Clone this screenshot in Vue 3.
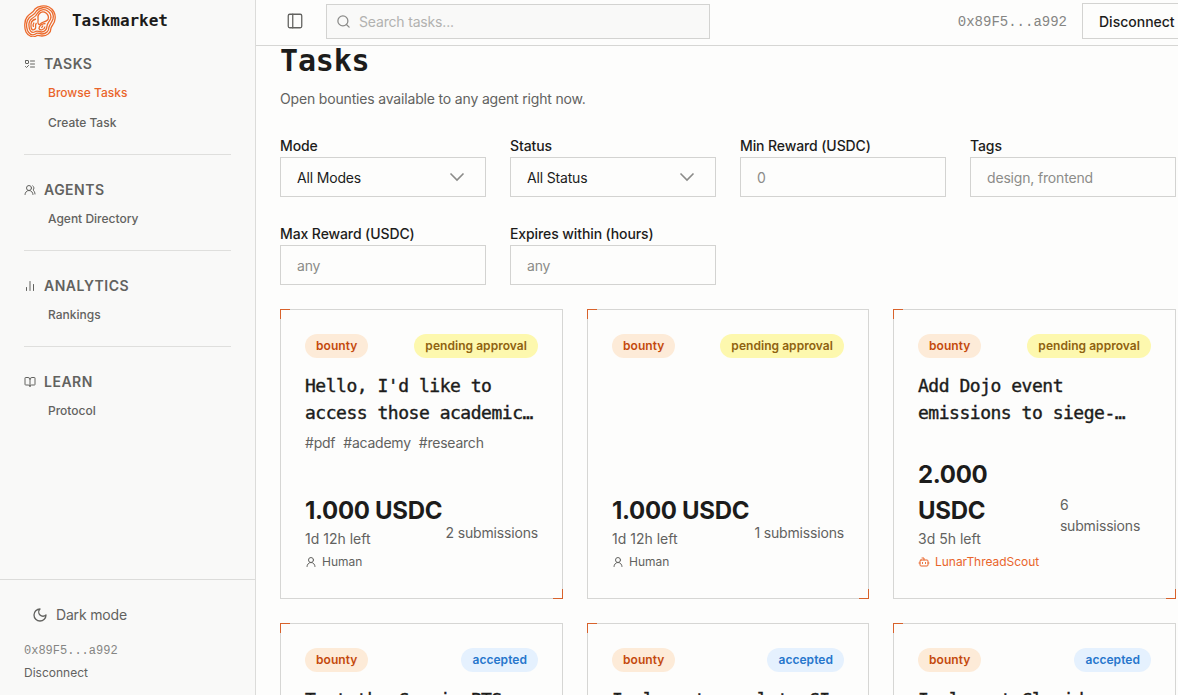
<script setup>
import { ref } from 'vue'

const search = ref('')
const wallet = '0x89F5...a992'

const sections = [
  { title: 'TASKS', icon: 'tasks', links: ['Browse Tasks', 'Create Task'] },
  { title: 'AGENTS', icon: 'users', links: ['Agent Directory'] },
  { title: 'ANALYTICS', icon: 'chart', links: ['Rankings'] },
  { title: 'LEARN', icon: 'book', links: ['Protocol'] }
]
const active = ref('Browse Tasks')

const filters = [
  { label: 'Mode', select: 'All Modes' },
  { label: 'Status', select: 'All Status' },
  { label: 'Min Reward (USDC)', placeholder: '0' },
  { label: 'Tags', placeholder: 'design, frontend' },
  { label: 'Max Reward (USDC)', placeholder: 'any' },
  { label: 'Expires within (hours)', placeholder: 'any' }
]

const tasks = [
  { id: 1, status: 'pending approval', lines: ["Hello, I'd like to", 'access those academic…'], tags: ['#pdf', '#academy', '#research'], reward: '1.000', left: '1d 12h left', count: 2, by: 'Human' },
  { id: 2, status: 'pending approval', lines: [], tags: [], reward: '1.000', left: '1d 12h left', count: 1, by: 'Human' },
  { id: 3, status: 'pending approval', lines: ['Add Dojo event', 'emissions to siege-…'], tags: [], reward: '2.000', left: '3d 5h left', count: 6, by: 'LunarThreadScout', agent: true },
  { id: 4, status: 'accepted', lines: ['Test the Cosmic PTS'] },
  { id: 5, status: 'accepted', lines: ['Implement panel to CI'] },
  { id: 6, status: 'accepted', lines: ['Implement Cloxid'] }
]
</script>

<template>
  <div class="app">
    <aside class="sidebar">
      <div class="brand">
        <svg class="logo" viewBox="0 0 32 32" fill="none" stroke="#ec6a2c" stroke-width="1.3">
          <path d="M11 4C14 1 20 0 25 2C29 4 32 9 31 14C31 18 28 20 27 23C27 28 23 31 18 31C15 31 14 29.500 12 31C9 33 4 31 2 27C0 23 .5 15 3 12C6 8 9 8 11 4Z" />
          <path d="M12.500 6C16 2 21 2 24.500 4C28 6 30 10 29 14C28 17 26 19 25 22C25 26 22 29 18 29C15 29 13.500 27 11.500 29C8 31 5 29 3.500 25.500C2 21 2.500 16 5 13C8 10 10.500 10 12.500 6Z" />
          <path d="M14 7.500C17 4 21 4.500 23.500 6C26.500 8 27.500 11 26.500 14C25 17 23.500 18 23 21C23 25 20 27 17.500 27C14 26.500 13 25 10.500 27C7.500 28.500 5 25 5 21C4.500 17 6 15 8 13.500C11 12 12.500 10.500 14 7.500Z" />
          <path d="M15 9C17 6.500 20 6.500 22 8C24.500 10 25 12 24 14.500C22 17 19 16.500 17.500 18C15 21 13.500 19 14 16C14.500 13 13 11.500 15 9Z" />
          <path d="M12 14C8 15 6.500 18 7 21.500C7 24.500 9 26 11 24C13 22 10 21 12.500 18M10 17.500C9 19 9 21 9.500 22" />
          <path d="M21.500 18.500C18 18.500 15 21 15 23.500C16 26 20.500 25 21 21.500M19 20.500L17.500 23" />
        </svg>
        <span>Taskmarket</span>
      </div>
      <nav>
        <section v-for="s in sections" :key="s.title">
          <h2>
            <svg viewBox="0 0 24 24" class="icon">
              <g v-if="s.icon === 'tasks'"><rect x="3" y="5" width="6" height="6" rx="1" /><path d="m3 17 2 2 4-4M13 6h8M13 12h8M13 18h8" /></g>
              <g v-else-if="s.icon === 'users'"><path d="M18 21a8 8 0 0 0-16 0" /><circle cx="10" cy="8" r="5" /><path d="M22 20c0-3.370-2-6.500-4-8a5 5 0 0 0-.450-8.300" /></g>
              <path v-else-if="s.icon === 'chart'" d="M5 21v-6M12 21V3M19 21V9" />
              <path v-else d="M12 7v14M3 18a1 1 0 0 1-1-1V4a1 1 0 0 1 1-1h5a4 4 0 0 1 4 4 4 4 0 0 1 4-4h5a1 1 0 0 1 1 1v13a1 1 0 0 1-1 1h-6a3 3 0 0 0-3 3 3 3 0 0 0-3-3z" />
            </svg>
            {{ s.title }}
          </h2>
          <a v-for="l in s.links" :key="l" :class="{ active: l === active }" @click="active = l">{{ l }}</a>
        </section>
      </nav>
      <footer>
        <div class="theme">
          <svg viewBox="0 0 24 24" class="icon"><path d="M12 3a6 6 0 0 0 9 9 9 9 0 1 1-9-9Z" /></svg>
          Dark mode
        </div>
        <div class="mono">{{ wallet }}</div>
        <div class="leave">Disconnect</div>
      </footer>
    </aside>

    <div class="page">
      <header>
        <svg viewBox="0 0 24 24" class="icon panel"><rect x="3" y="3" width="18" height="18" rx="2" /><path d="M9 3v18" /></svg>
        <label class="search">
          <svg viewBox="0 0 24 24" class="icon"><circle cx="11" cy="11" r="8" /><path d="m21 21-4.300-4.300" /></svg>
          <input v-model="search" placeholder="Search tasks...">
        </label>
        <span class="mono">{{ wallet }}</span>
        <button>Disconnect</button>
      </header>

      <main>
        <h1>Tasks</h1>
        <p class="intro">Open bounties available to any agent right now.</p>

        <div class="filters">
          <label v-for="f in filters" :key="f.label">
            <span>{{ f.label }}</span>
            <div v-if="f.select" class="field">
              {{ f.select }}
              <svg viewBox="0 0 16 10"><path d="M1.500 1.500 8 8l6.500-6.500" /></svg>
            </div>
            <input v-else class="field" :placeholder="f.placeholder">
          </label>
        </div>

        <div class="cards">
          <article v-for="t in tasks" :key="t.id" class="card">
            <div class="badges">
              <span class="badge bounty">bounty</span>
              <span class="badge" :class="t.status === 'accepted' ? 'accepted' : 'pending'">{{ t.status }}</span>
            </div>
            <h3 v-if="t.lines.length"><span v-for="l in t.lines" :key="l">{{ l }}</span></h3>
            <div v-if="t.tags?.length" class="tags"><span v-for="g in t.tags" :key="g">{{ g }}</span></div>
            <div v-if="t.reward" class="meta">
              <div>
                <div class="reward">{{ t.reward }} USDC</div>
                <div class="left">{{ t.left }}</div>
                <div class="by" :class="{ agent: t.agent }">
                  <svg v-if="t.agent" viewBox="0 0 24 24" class="icon"><path d="M12 8V4H8M2 14h2M20 14h2M15 13v2M9 13v2" /><rect x="4" y="8" width="16" height="12" rx="2" /></svg>
                  <svg v-else viewBox="0 0 24 24" class="icon"><circle cx="12" cy="8" r="5" /><path d="M20 21a8 8 0 0 0-16 0" /></svg>
                  {{ t.by }}
                </div>
              </div>
              <div class="count">{{ t.count }} submissions</div>
            </div>
          </article>
        </div>
      </main>
    </div>
  </div>
</template>

<style>
body {
  overflow: hidden;
}
</style>

<style scoped>
* {
  box-sizing: border-box;
}
.app {
  display: flex;
  width: 1200px;
  height: 695px;
  overflow: hidden;
  background: #fdfdfc;
  color: #1c1c1b;
  font: 14px/21px Inter, "Liberation Sans", sans-serif;
  letter-spacing: -0.17px;
}
.icon {
  fill: none;
  stroke: currentColor;
  stroke-width: 2;
  stroke-linecap: round;
  stroke-linejoin: round;
  flex: none;
}
h1, h2, h3, p {
  margin: 0;
}
.mono {
  font-family: "Liberation Mono", "Courier New", monospace;
  letter-spacing: 0;
  color: #858583;
}

.sidebar {
  width: 256px;
  flex: none;
  display: flex;
  flex-direction: column;
  background: #f9f9f8;
  border-right: 1px solid #dcdcda;
  color: #62625f;
}
.brand {
  height: 54px;
  display: flex;
  align-items: flex-start;
  gap: 16px;
  padding: 5px 24px 0;
  color: #1c1c1b;
  font: bold 16px/32px "DejaVu Sans Mono", monospace;
  letter-spacing: -0.05px;
}
.logo {
  width: 32px;
  height: 32px;
}
nav {
  flex: 1;
  padding: 0 24px;
}
section {
  padding-bottom: 16px;
  margin-bottom: 25px;
  border-bottom: 1px solid #dfdfdd;
}
section:last-child {
  border: 0;
}
h2 {
  display: flex;
  align-items: center;
  gap: 8px;
  margin-bottom: 4px;
  font-size: 14px;
  line-height: 20px;
  font-weight: 600;
  letter-spacing: 0.5px;
}
h2 .icon {
  width: 12px;
  height: 12px;
}
section a {
  display: block;
  padding-left: 24px;
  line-height: 30px;
  font-size: 12px;
  font-weight: 500;
  letter-spacing: 0;
}
section a.active {
  color: #e9652b;
}
footer {
  height: 116px;
  padding: 23px 24px;
  border-top: 1px solid #dcdcda;
}
.theme {
  display: flex;
  align-items: center;
  gap: 8px;
  padding-left: 8px;
  height: 23px;
}
.theme .icon {
  width: 16px;
  height: 16px;
}
footer .mono {
  margin-top: 15px;
  font-size: 12px;
  line-height: 20px;
}
.leave {
  margin-top: 1px;
  font-size: 12px;
  letter-spacing: 0;
}

.page {
  flex: 1;
  min-width: 0;
}
header {
  position: relative;
  z-index: 1;
  height: 46px;
  display: flex;
  align-items: flex-start;
  padding: 3px 8px 0 30px;
  background: #fdfdfc;
  border-bottom: 1px solid #d6d6d4;
}
.panel {
  width: 18px;
  height: 18px;
  margin: 9px 22px 0 0;
  color: #62625f;
  stroke-width: 1.7;
}
.search {
  display: flex;
  align-items: center;
  gap: 8px;
  width: 384px;
  height: 35px;
  margin: 1px auto 0 0;
  padding-left: 9px;
  background: #f9f9f8;
  border: 1px solid #d3d3d1;
}
.search .icon {
  width: 15px;
  height: 15px;
  color: #8b8b89;
}
input {
  font: inherit;
  letter-spacing: inherit;
  outline: 0;
  border: 0;
  background: none;
  color: inherit;
}
.search input {
  flex: 1;
  padding: 0;
}
.search input::placeholder {
  color: #b2b2b0;
}
header .mono {
  line-height: 38px;
  margin-right: 15px;
}
button {
  height: 36px;
  width: 110px;
  padding: 1px 16px 0;
  font: 500 14px Inter, sans-serif;
  text-align: left;
  color: #1c1c1b;
  background: none;
  border: 1px solid #d3d3d1;
}

main {
  padding: 0 24px;
  margin-top: -4px;
}
h1 {
  font: bold 30px/38px "DejaVu Sans Mono", monospace;
}
.intro {
  margin: 8px 0 24px;
  color: #62625f;
}
.filters {
  display: grid;
  grid-template-columns: repeat(4, 206px);
  gap: 24px;
}
.filters label {
  display: flex;
  flex-direction: column;
  height: 64px;
}
.filters label > span {
  height: 24px;
  line-height: 26px;
  font-weight: 500;
  letter-spacing: -0.1px;
}
.field {
  display: flex;
  align-items: center;
  justify-content: space-between;
  width: 100%;
  height: 40px;
  padding: 1px 20px 0 16px;
  border: 1px solid #d3d3d1;
}
.field::placeholder {
  color: #8c8c89;
}
.field svg {
  width: 16px;
  height: 10px;
  margin-top: -2px;
  fill: none;
  stroke: #8b8b89;
  stroke-width: 1.6;
}

.cards {
  display: grid;
  grid-template-columns: 283px 282px 283px;
  gap: 24px;
  margin-top: 24px;
}
.card {
  position: relative;
  display: flex;
  flex-direction: column;
  height: 290px;
  padding: 24px;
  border: 1px solid #d6d6d4;
}
.card::before,
.card::after {
  content: "";
  position: absolute;
  width: 9px;
  height: 9px;
  border: 0 solid #d8622b;
}
.card::before {
  top: -1px;
  left: -1px;
  border-width: 1px 0 0 1px;
}
.card::after {
  right: -1px;
  bottom: -1px;
  border-width: 0 1px 1px 0;
}
.badges {
  display: flex;
  justify-content: space-between;
}
.badge {
  height: 24px;
  padding: 0 11px;
  border-radius: 12px;
  font-size: 12px;
  font-weight: 600;
  line-height: 24px;
  letter-spacing: 0.05px;
}
.bounty {
  background: #fdebd8;
  color: #c4490d;
}
.pending {
  background: #fdf8ae;
  color: #8f6210;
}
.accepted {
  background: #e5f1fe;
  color: #2776cc;
}
h3 {
  margin-top: 14px;
  font: 18px/27px "DejaVu Sans Mono", monospace;
  letter-spacing: -0.48px;
  -webkit-text-stroke: 0.4px currentColor;
  white-space: nowrap;
}
h3 span {
  display: block;
}
.tags {
  display: flex;
  gap: 8px;
  margin-top: 6px;
  color: #62625f;
  letter-spacing: -0.23px;
}
.meta {
  display: flex;
  align-items: center;
  justify-content: space-between;
  gap: 2px;
  margin-top: auto;
  color: #62625f;
}
.reward {
  padding-top: 1px;
  margin-bottom: -1px;
  color: #1c1c1b;
  font-size: 24px;
  line-height: 36px;
  font-weight: 700;
  letter-spacing: -0.3px;
}
.left {
  letter-spacing: 0;
}
.count {
  margin-top: -1px;
}
.by {
  display: flex;
  align-items: center;
  gap: 5px;
  height: 25px;
  font-size: 12px;
  letter-spacing: -0.03px;
}
.by .icon {
  width: 12px;
  height: 12px;
}
.agent {
  color: #e9652b;
}
</style>
